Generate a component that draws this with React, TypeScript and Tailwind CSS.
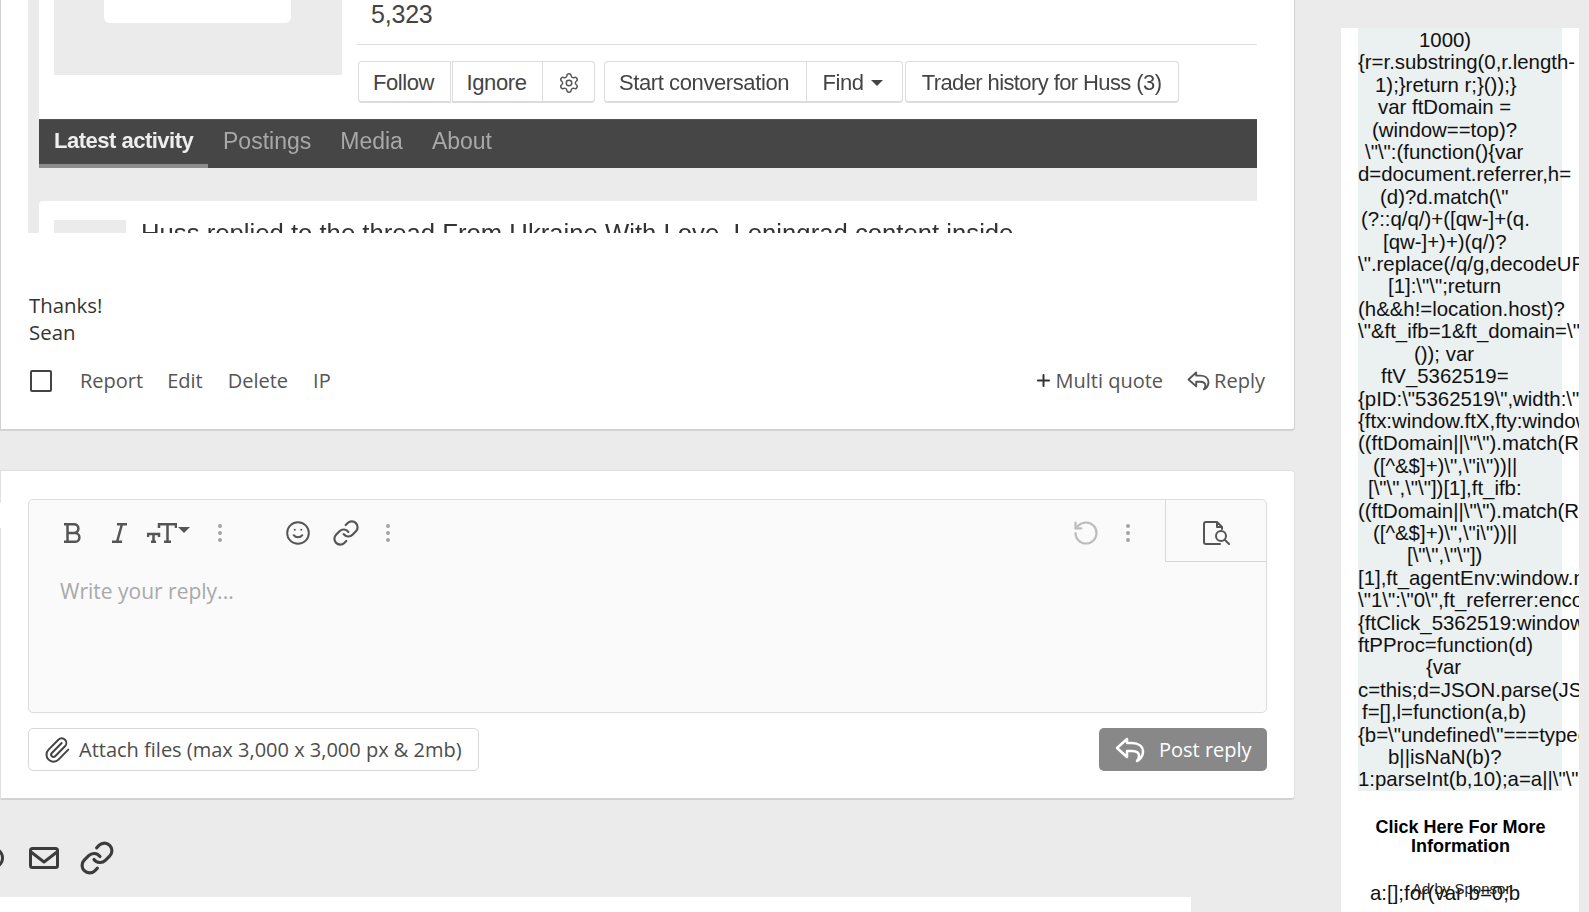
import { Settings, Smile, Link, RotateCcw, Paperclip, Plus } from "lucide-react";

const SIDE: [string, string][] = [
  ['1000)', 'pl-[61px]'], ['{r=r.substring(0,r.length-', 'pl-0'], ['1);}return r;}());}', 'pl-[17px]'], ['var ftDomain =', 'pl-[20px]'], ['(window==top)?', 'pl-[14px]'],
  ['\\"\\":(function(){var', 'pl-[7px]'], ['d=document.referrer,h=', 'pl-0'], ['(d)?d.match(\\"', 'pl-[22px]'], ['(?::q/q/)+([qw-]+(q.', 'pl-[3px]'], ['[qw-]+)+)(q/)?', 'pl-[25px]'],
  ['\\".replace(/q/g,decodeURIComponent)', 'pl-0'], ['[1]:\\"\\";return', 'pl-[30px]'], ['(h&&h!=location.host)?', 'pl-0'], ['\\"&ft_ifb=1&ft_domain=\\"', 'pl-0'],
  ['()); var', 'pl-[56px]'], ['ftV_5362519=', 'pl-[23px]'], ['{pID:\\"5362519\\",width:\\"300\\"', 'pl-0'], ['{ftx:window.ftX,fty:window.ftY', 'pl-0'], ['((ftDomain||\\"\\").match(RegExp', 'pl-0'], ['([^&$]+)\\",\\"i\\"))||', 'pl-[15px]'],
  ['[\\"\\",\\"\\"])[1],ft_ifb:', 'pl-[10px]'], ['((ftDomain||\\"\\").match(RegExp', 'pl-0'], ['([^&$]+)\\",\\"i\\"))||', 'pl-[15px]'], ['[\\"\\",\\"\\"])', 'pl-[49px]'],
  ['[1],ft_agentEnv:window.navigator', 'pl-0'], ['\\"1\\":\\"0\\",ft_referrer:encodeURI', 'pl-0'], ['{ftClick_5362519:window.ftClick', 'pl-0'], ['ftPProc=function(d)', 'pl-0'], ['{var', 'pl-[68px]'], ['c=this;d=JSON.parse(JSON', 'pl-0'],
  ['f=[],l=function(a,b)', 'pl-[4px]'], ['{b=\\"undefined\\"===typeof', 'pl-0'], ['b||isNaN(b)?', 'pl-[30px]'], ['1:parseInt(b,10);a=a||\\"\\"', 'pl-0'],
];

function ReplyIcon({ className, sw = 2 }: { className: string; sw?: number }) {
  return (
    <svg viewBox="0 0 30 26" fill="none" stroke="currentColor" strokeWidth={sw} strokeLinejoin="round" strokeLinecap="round" className={className}>
      <path d="M12 2 2 11l10 9v-6h5c5 0 7 2 7 5 0 2-1 4-2 5 3-1 6-5 6-9 0-6-5-9-11-9h-5z" />
    </svg>
  );
}

function Dots({ className }: { className: string }) {
  return (
    <svg viewBox="0 0 4 18" fill="#a3a3a3" className={"w-[4px] h-[18px] shrink-0 " + className}>
      <circle cx="2" cy="2" r="2" /><circle cx="2" cy="9" r="2" /><circle cx="2" cy="16" r="2" />
    </svg>
  );
}

function ScreenBtn({ children, className = "" }: { children: React.ReactNode; className?: string }) {
  return (
    <div className={"h-[42px] bg-white border border-[#dcdcdc] border-b-2 flex items-center justify-center pt-[2px] text-[22px] tracking-[-0.4px] text-[#444] " + className}>
      {children}
    </div>
  );
}

export default function App() {
  return (
    <div className="w-[1589px] h-[912px] overflow-hidden bg-[#ebebeb] flex font-['Open_Sans',sans-serif] text-[#474747]">
      <div className="w-[1295px] shrink-0 flex flex-col">
        {/* first post card */}
        <div className="h-[431px] shrink-0 bg-white border-l border-r border-b-2 border-[#d2d2d2] rounded-br-[4px] flex flex-col">
          <div className="ml-[27px] mr-[37px] h-[233px] overflow-hidden bg-[#ebebeb] pl-[11px] font-['Liberation_Sans',sans-serif] shrink-0">
            <div className="blur-[0.4px]">
              <div className="bg-white h-[168px] flex flex-col">
                <div className="flex h-[119px] shrink-0">
                  <div className="ml-[15px] w-[288px] h-[75px] bg-[#ebebeb] flex justify-center">
                    <div className="w-[187px] h-[23px] bg-white rounded-b-[6px] -ml-[2px]"></div>
                  </div>
                  <div className="ml-[15px] flex-1 flex flex-col">
                    <div className="h-[45px] border-b border-[#dedede] pl-[14px] text-[25px] leading-[28px] text-[#444] tracking-[-0.2px]">5,323</div>
                    <div className="flex mt-[16px] pl-px">
                      <ScreenBtn className="w-[93px] rounded-l-[4px] pr-[2px]">Follow</ScreenBtn>
                      <ScreenBtn className="w-[90px] ml-px border-r-0 pr-[2px]">Ignore</ScreenBtn>
                      <ScreenBtn className="w-[53px] rounded-r-[4px]"><Settings className="w-[22px] h-[22px] text-[#555]" strokeWidth={1.6} /></ScreenBtn>
                      <ScreenBtn className="w-[202px] ml-[9px] rounded-l-[4px] border-r-0 pr-[3px]">Start conversation</ScreenBtn>
                      <ScreenBtn className="w-[97px] rounded-r-[4px] gap-[7px] pr-[4px]">Find<span className="w-0 h-0 border-l-[6px] border-r-[6px] border-t-[6px] border-l-transparent border-r-transparent border-t-[#444]"></span></ScreenBtn>
                      <ScreenBtn className="w-[274px] ml-[2px] rounded-[4px] tracking-[-0.6px] pr-px">Trader history for Huss (3)</ScreenBtn>
                    </div>
                  </div>
                </div>
                <div className="h-[49px] bg-[#464646] flex text-[23px] leading-[32px] text-[#a8a8a8] border-t border-[#555]">
                  <div className="w-[169px] pl-[15px] pt-[5px] text-[#eeeeee] font-bold text-[22px] tracking-[-0.5px] border-b-[4px] border-[#8c8c8c] h-[48px] -mb-px">Latest activity</div>
                  <div className="ml-[15px] pt-[5px]">Postings</div>
                  <div className="ml-[29px] pt-[5px]">Media</div>
                  <div className="ml-[29px] pt-[5px]">About</div>
                </div>
              </div>
              <div className="h-[33px]"></div>
              <div className="bg-white rounded-tl-[4px] h-[60px] pl-[15px] pt-[19px] flex">
                <div className="w-[72px] h-[40px] bg-[#ebebeb] shrink-0"></div>
                <div className="ml-[15px] text-[25.7px] leading-[26px] text-[#333] whitespace-nowrap">Huss replied to the thread From Ukraine With Love. Leningrad content inside</div>
              </div>
            </div>
          </div>
          <div className="pl-[28px] pt-[59px] text-[20.4px] leading-[27px] text-[#333]">
            <div>Thanks!</div>
            <div>Sean</div>
          </div>
          <div className="flex items-center pl-[29px] pr-[29px] mt-[21px] text-[#555] text-[20px] leading-[27px]">
            <div className="w-[22px] h-[22px] border-2 border-[#444] rounded-[2px] shrink-0"></div>
            <span className="ml-[28px]">Report</span>
            <span className="ml-[24px]">Edit</span>
            <span className="ml-[25px]">Delete</span>
            <span className="ml-[25px]">IP</span>
            <span className="ml-auto flex items-center"><Plus className="w-[19px] h-[19px] text-[#333]" strokeWidth={2.5} /><span className="ml-[3px]">Multi quote</span></span>
            <span className="ml-[24px] flex items-center"><ReplyIcon className="w-[23px] h-[20px]" sw={2.5} /><span className="ml-[4px]">Reply</span></span>
          </div>
        </div>

        {/* reply card */}
        <div className="relative mt-[39px] h-[330px] bg-white border-l border-r border-t border-[#e0e0e0] border-b-2 border-b-[#d2d2d2] rounded-r-[4px] shrink-0 px-[27px] pt-[28px]">
          <div className="h-[214px] bg-[#fafafa] border border-[#dcdcdc] rounded-[5px] flex flex-col">
            <div className="flex h-[62px] shrink-0">
              <div className="flex-1 flex items-center pt-[4px] text-[#555]">
                <svg viewBox="0 0 17 20" fill="none" stroke="currentColor" strokeWidth="2.5" className="ml-[35px] w-[17px] h-[20px] shrink-0">
                  <path d="M0 1.200h10a4.400 4.400 0 0 1 0 8.800H3h8a4.400 4.400 0 0 1 0 8.800H0M3.500 1v18" />
                </svg>
                <svg viewBox="0 0 15 20" fill="none" stroke="currentColor" strokeWidth="2.5" className="ml-[31px] w-[15px] h-[20px] shrink-0">
                  <path d="M5 1.200h10M0 18.800h10M10 1 5 19" />
                </svg>
                <svg viewBox="0 0 30 20" fill="none" stroke="currentColor" strokeWidth="2.5" className="ml-[20px] w-[30px] h-[20px] shrink-0">
                  <path d="M1 14v-3h11v3M6.500 11v8M4 18.800h5M12 5V1.200h17V5M20.500 1v18M17 18.800h7" />
                </svg>
                <span className="ml-px w-0 h-0 border-l-[6px] border-r-[6px] border-t-[6px] border-l-transparent border-r-transparent border-t-[#555] -mt-[6px]"></span>
                <Dots className="ml-[28px]" />
                <Smile className="ml-[63px] w-[26px] h-[26px] shrink-0" strokeWidth={1.8} />
                <Link className="ml-[21px] w-[28px] h-[28px] shrink-0" strokeWidth={1.9} />
                <Dots className="ml-[26px]" />
                <RotateCcw className="ml-auto w-[28px] h-[28px] text-[#bcbcbc] shrink-0" strokeWidth={1.9} />
                <Dots className="ml-[26px] mr-[35px]" />
              </div>
              <div className="w-[101px] border-l border-b border-[#d8d8d8] flex items-center justify-center pt-[4px] text-[#555]">
                <svg viewBox="0 0 27 24" fill="none" stroke="currentColor" strokeWidth="2" strokeLinejoin="round" strokeLinecap="round" className="w-[27px] h-[24px]">
                  <path d="M19 8V6l-5-5H3a2 2 0 0 0-2 2v18a2 2 0 0 0 2 2h14M14 1v5h5" />
                  <circle cx="18" cy="15" r="5" />
                  <path d="m22 19 4 4" />
                </svg>
              </div>
            </div>
            <div className="pl-[31px] pt-[16px] text-[21px] leading-[27px] text-[#a9a9a9]">Write your reply...</div>
          </div>
          <div className="flex justify-between mt-[15px]">
            <div className="h-[43px] w-[451px] border border-[#d8d8d8] rounded-[5px] bg-white flex items-center pl-[14px] text-[20px] text-[#4d4d4d]">
              <Paperclip className="w-[28px] h-[28px] text-[#444] shrink-0" strokeWidth={1.7} />
              <span className="ml-[8px] pt-px">Attach files (max 3,000 x 3,000 px &amp; 2mb)</span>
            </div>
            <div className="h-[43px] w-[168px] rounded-[5px] bg-[#888888] flex items-center pl-[16px] text-[20px] text-white">
              <ReplyIcon className="w-[30px] h-[26px] shrink-0" sw={2.5} />
              <span className="ml-[14px] pt-px">Post reply</span>
            </div>
          </div>
          <div className="absolute left-[-1px] top-[32px] w-px h-[25px] bg-white"></div>
        </div>

        {/* share row */}
        <div className="flex items-start h-[97px] shrink-0 pl-[29px] pt-[43px] text-[#3c3c3c] relative">
          <div className="absolute left-[-18px] top-[47px] w-[22px] h-[22px] rounded-full border-[3px] border-[#3c3c3c]"></div>
          <svg viewBox="0 0 30 22" fill="none" stroke="currentColor" strokeWidth="3" strokeLinejoin="round" className="w-[30px] h-[22px] mt-[4px] shrink-0">
            <rect x="1.500" y="1.500" width="27" height="19" rx="2" />
            <path d="m2 5 13 10L28 5" />
          </svg>
          <Link className="ml-[20px] -mt-[3px] w-[36px] h-[36px] shrink-0" strokeWidth={2.1} />
        </div>
        <div className="w-[1191px] h-[15px] bg-white shrink-0"></div>
      </div>

      {/* sponsor column */}
      <div className="ml-[46px] mt-[28px] w-[238px] h-[884px] bg-white overflow-hidden font-['Liberation_Sans',sans-serif] text-[#111] shrink-0 relative">
        <div className="ml-[17px] w-[204px] bg-[#ebf0f0] text-[20.4px] leading-[22.4px] whitespace-nowrap pt-px">
          {SIDE.map(([l, p], i) => (<div key={i} className={p}>{l}</div>))}
        </div>
        <div className="mt-[27px] ml-[17px] w-[205px] text-center text-[18px] leading-[19px] font-bold text-black">Click Here For More<br />Information</div>
        <div className="mt-[26px] ml-[29px] text-[20.4px] leading-[22px] whitespace-nowrap">a:[];for(var b=0;b</div>
        <div className="absolute left-[71px] top-[852px] text-[15px] leading-[18px] whitespace-nowrap text-[#222]">Ad by Sponsor</div>
      </div>
    </div>
  );
}
